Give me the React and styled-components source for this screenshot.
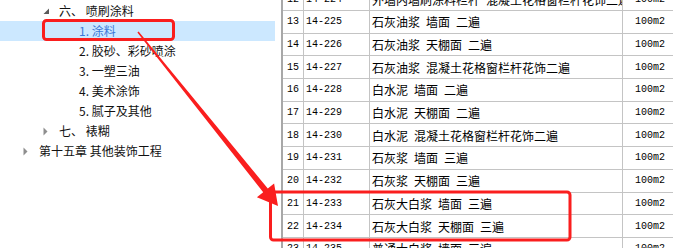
import React from "react";
import styled, { createGlobalStyle } from "styled-components";

const Global = createGlobalStyle`
  html, body { margin: 0; padding: 0; background: #fff; }
  body { width: 673px; height: 248px; overflow: hidden; }
`;

const Page = styled.div`
  position: relative;
  width: 673px;
  height: 248px;
  display: flex;
  overflow: hidden;
  background: #fff;
`;

const TreePanel = styled.div`
  width: 281px;
  flex: none;
  padding: 1px 6px 0 0;
  box-sizing: border-box;
  display: flex;
  flex-direction: column;
  font-family: "Noto Sans CJK SC", "Noto Sans", sans-serif;
  font-size: 12px;
`;

const TreeRow = styled.div`
  height: 20px;
  display: flex;
  align-items: center;
  padding-left: ${(p) => 23 + p.$level * 20}px;
  background: ${(p) => (p.$selected ? "#cce8ff" : "transparent")};
  color: ${(p) => (p.$selected ? "#3b78d8" : "#111")};
  white-space: pre;
`;

const Toggle = styled.span`
  width: 16px;
  flex: none;
  display: flex;
  align-items: center;
  height: 20px;
`;

const Label = styled.span`
  line-height: 20px;
`;

const Grid = styled.div`
  flex: 1;
  border-left: 2px solid #a8a8a8;
  overflow: hidden;
  background: #fff;
`;

const GridBody = styled.div`
  margin-top: -11.7px;
`;

const Row = styled.div`
  display: grid;
  grid-template-columns: 21px 66px 253px 1fr;
  height: 22.7px;
  box-sizing: border-box;
  border-bottom: 1px solid #c4c4c4;
`;

const Cell = styled.div`
  border-right: ${(p) => (p.$last ? "none" : "1px solid #c4c4c4")};
  display: flex;
  align-items: center;
  justify-content: ${(p) => p.$align || "flex-start"};
  padding: ${(p) => p.$pad || "0 0 0 2px"};
  overflow: hidden;
  white-space: pre;
  color: #000;
  font-family: ${(p) =>
    p.$mono
      ? '"Liberation Mono", "DejaVu Sans Mono", monospace'
      : '"Noto Sans CJK SC", "Noto Sans", sans-serif'};
  font-size: ${(p) => (p.$mono ? "10px" : "12px")};
  word-spacing: ${(p) => (p.$mono ? "0" : "3.3px")};
`;

const Overlay = styled.svg`
  position: absolute;
  left: 0;
  top: 0;
  width: 673px;
  height: 248px;
  pointer-events: none;
`;

const Expanded = () => (
  <svg width="7" height="7" viewBox="0 0 7 7">
    <path d="M6 0.5 L6 6 L0.5 6 Z" fill="#5a5a5a" />
  </svg>
);

const Collapsed = () => (
  <svg width="6" height="9" viewBox="0 0 6 9">
    <path d="M0.5 0.5 L4.5 4.5 L0.5 8.5 Z" fill="#8e8e8e" />
  </svg>
);

const tree = [
  { level: 1, label: "六、 喷刷涂料", toggle: "open" },
  { level: 2, label: "1. 涂料", selected: true },
  { level: 2, label: "2. 胶砂、彩砂喷涂" },
  { level: 2, label: "3. 一塑三油" },
  { level: 2, label: "4. 美术涂饰" },
  { level: 2, label: "5. 腻子及其他" },
  { level: 1, label: "七、 裱糊", toggle: "closed" },
  { level: 0, label: "第十五章 其他装饰工程", toggle: "closed" },
];

const rows = [
  ["12", "14-224", "外墙内墙刷涂料栏杆 混凝土花格窗栏杆花饰二遍"],
  ["13", "14-225", "石灰油浆 墙面 二遍"],
  ["14", "14-226", "石灰油浆 天棚面 二遍"],
  ["15", "14-227", "石灰油浆 混凝土花格窗栏杆花饰二遍"],
  ["16", "14-228", "白水泥 墙面 二遍"],
  ["17", "14-229", "白水泥 天棚面 二遍"],
  ["18", "14-230", "白水泥 混凝土花格窗栏杆花饰二遍"],
  ["19", "14-231", "石灰浆 墙面 三遍"],
  ["20", "14-232", "石灰浆 天棚面 三遍"],
  ["21", "14-233", "石灰大白浆 墙面 三遍"],
  ["22", "14-234", "石灰大白浆 天棚面 三遍"],
  ["23", "14-235", "普通大白浆 墙面 三遍"],
];

export default function App() {
  return (
    <>
      <Global />
      <Page>
        <TreePanel>
          {tree.map((t, i) => (
            <TreeRow key={i} $level={t.level} $selected={t.selected}>
              <Toggle>
                {t.toggle === "open" && <Expanded />}
                {t.toggle === "closed" && <Collapsed />}
              </Toggle>
              <Label>{t.label}</Label>
            </TreeRow>
          ))}
        </TreePanel>
        <Grid>
          <GridBody>
            {rows.map((r) => (
              <Row key={r[0]}>
                <Cell $mono $align="center" $pad="0">{r[0]}</Cell>
                <Cell $mono>{r[1]}</Cell>
                <Cell>{r[2]}</Cell>
                <Cell $mono $last $align="flex-end" $pad="0 8px 0 0">100m2</Cell>
              </Row>
            ))}
          </GridBody>
        </Grid>
        <Overlay viewBox="0 0 673 248">
          <rect x="43.5" y="20.5" width="130" height="19" rx="3" fill="none" stroke="#fa1e1e" strokeWidth="3" />
          <rect x="270.5" y="192" width="299.5" height="48" rx="3" fill="none" stroke="#fa1e1e" strokeWidth="3" />
          <polygon
            points="137.4,32.5 263.2,192.3 256.9,197.3 278,206 274.1,183.5 267.8,188.5 138.6,31.5"
            fill="#fa1e1e"
          />
        </Overlay>
      </Page>
    </>
  );
}
